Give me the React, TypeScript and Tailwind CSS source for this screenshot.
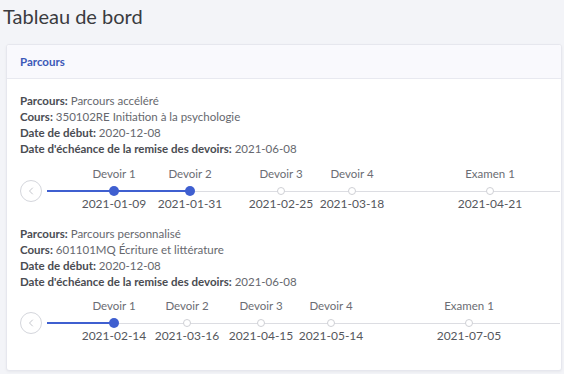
import { ChevronLeft } from 'lucide-react';

type Step = { label: string; date: string; x: number; done: boolean };

const PARCOURS: { info: [string, string][]; steps: Step[]; progress: number; gapTop: string }[] = [
  {
    info: [
      ['Parcours:', 'Parcours accéléré'],
      ['Cours:', '350102RE Initiation à la psychologie'],
      ['Date de début:', '2020-12-08'],
      ["Date d'échéance de la remise des devoirs:", '2021-06-08'],
    ],
    steps: [
      { label: 'Devoir 1', date: '2021-01-09', x: 67, done: true },
      { label: 'Devoir 2', date: '2021-01-31', x: 143, done: true },
      { label: 'Devoir 3', date: '2021-02-25', x: 234, done: false },
      { label: 'Devoir 4', date: '2021-03-18', x: 305, done: false },
      { label: 'Examen 1', date: '2021-04-21', x: 443, done: false },
    ],
    progress: 143,
    gapTop: 'mt-[9px]',
  },
  {
    info: [
      ['Parcours:', 'Parcours personnalisé'],
      ['Cours:', '601101MQ Écriture et littérature'],
      ['Date de début:', '2020-12-08'],
      ["Date d'échéance de la remise des devoirs:", '2021-06-08'],
    ],
    steps: [
      { label: 'Devoir 1', date: '2021-02-14', x: 67, done: true },
      { label: 'Devoir 2', date: '2021-03-16', x: 140, done: false },
      { label: 'Devoir 3', date: '2021-04-15', x: 214, done: false },
      { label: 'Devoir 4', date: '2021-05-14', x: 284, done: false },
      { label: 'Examen 1', date: '2021-07-05', x: 422, done: false },
    ],
    progress: 67,
    gapTop: 'mt-[8px]',
  },
];

function Timeline({ steps, progress }: { steps: Step[]; progress: number }) {
  return (
    <div className="-mr-[12px] flex h-[46px] items-start gap-[5px]">
      <button className="mt-[14px] flex h-[22px] w-[22px] shrink-0 items-center justify-center rounded-full border border-[#d4d6dc] bg-white text-[#c4c6cc]">
        <ChevronLeft size={12} strokeWidth={2} />
      </button>
      <div className="relative h-full flex-1">
        <div className="absolute inset-x-0 top-[25px] h-px bg-[#dcdde2]" />
        <div className="absolute left-0 top-[24px] h-[2px] bg-[#3f5fd0]" style={{ width: progress }} />
        {steps.map((s) => (
          <div
            key={s.date}
            className="absolute top-0 flex w-[80px] -translate-x-1/2 flex-col items-center whitespace-nowrap"
            style={{ left: s.x }}
          >
            <div className="text-[11.5px] leading-[16px] text-[#6b6d73]">{s.label}</div>
            <div className="flex h-[18px] items-center">
              {s.done ? (
                <div className="h-[10px] w-[10px] rounded-full bg-[#3f5fd0]" />
              ) : (
                <div className="h-[8px] w-[8px] rounded-full border border-[#cfd0d5] bg-white" />
              )}
            </div>
            <div className="text-[12px] leading-[8px] text-[#55575d]">{s.date}</div>
          </div>
        ))}
      </div>
    </div>
  );
}

export default function App() {
  return (
    <div className="min-h-screen overflow-hidden bg-[#f3f4f8] font-['Lato',sans-serif]">
      <h1 className="pl-[3px] pt-[3px] text-[20px] leading-[26px] text-[#3a3b3f]">Tableau de bord</h1>
      <div className="ml-[6px] mr-[2px] mt-[15px] overflow-hidden rounded-[3px] border border-[#e6e7ee] bg-white shadow-[0_1px_3px_rgba(0,0,0,0.05)]">
        <div className="flex h-[34px] items-center border-b border-[#e8e9f0] bg-[#f9f9fd] px-[13px] text-[11.5px] font-bold text-[#3b58b8]">
          Parcours
        </div>
        <div className="px-[13px] pb-[26px] pt-[14px]">
          {PARCOURS.map((p, i) => (
            <div key={i} className={i > 0 ? 'mt-[14px]' : ''}>
              <div className="text-[11.5px] leading-[16px] text-[#66686e]">
                {p.info.map(([k, v]) => (
                  <div key={k}>
                    <span className="font-bold text-[#4a4c52]">{k}</span> {v}
                  </div>
                ))}
              </div>
              <div className={p.gapTop}>
                <Timeline steps={p.steps} progress={p.progress} />
              </div>
            </div>
          ))}
        </div>
      </div>
    </div>
  );
}
